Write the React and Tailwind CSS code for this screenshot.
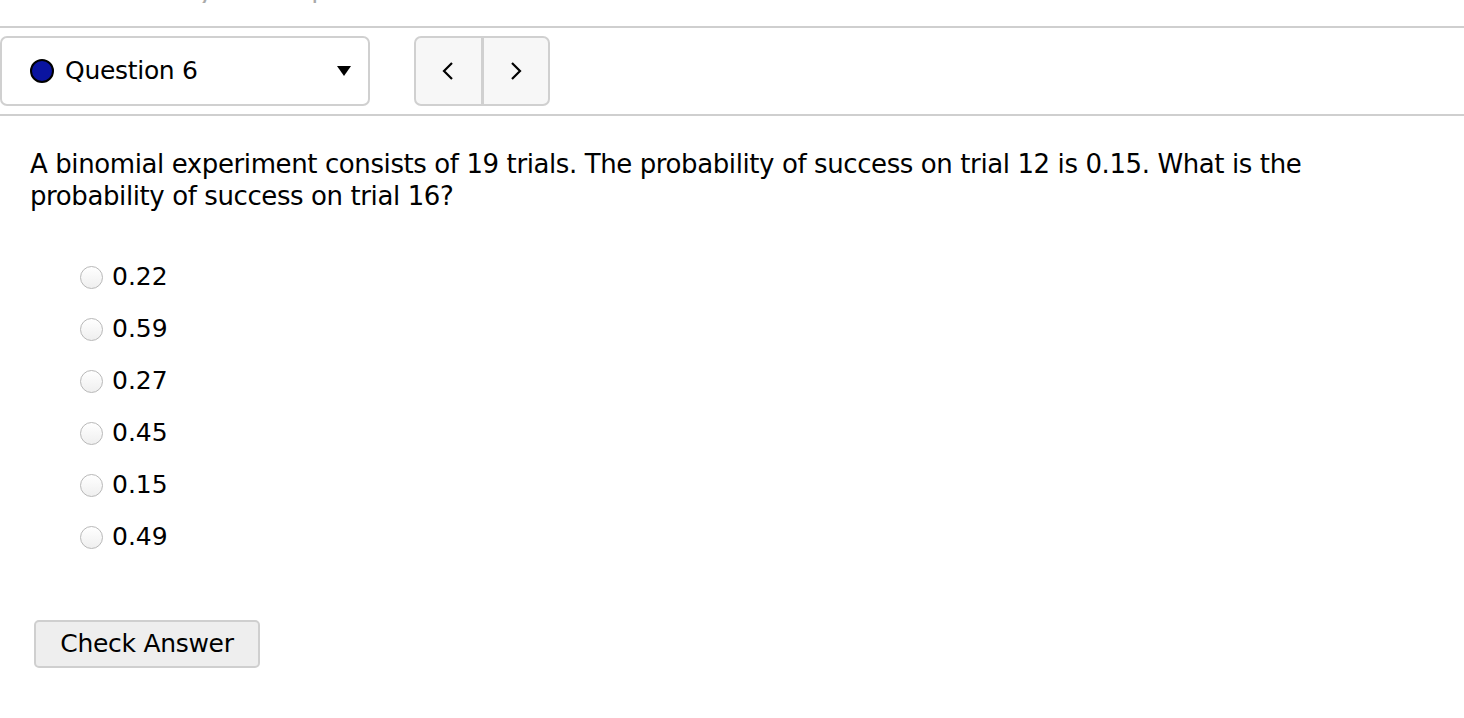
import { useState } from 'react'

const options = ['0.22', '0.59', '0.27', '0.45', '0.15', '0.49']

export default function App() {
  const [picked, setPicked] = useState(null)

  return (
    <div className="min-h-screen bg-white text-black font-['DejaVu_Sans',Verdana,sans-serif]">

      {/* 切れた前の行 */}
      <div className="h-[3px] overflow-hidden flex items-end">
        <p className="text-[26px] leading-none text-[#aaa] whitespace-nowrap">Score on last try: 0 of 1 pts. See Details</p>
      </div>

      <div className="mt-[23px] h-[2px] bg-[#cfcfcf]" />

      {/* 問題セレクタ */}
      <div className="flex gap-[44px] mt-[8px]">
        <button className="w-[370px] h-[70px] flex items-center pl-[28px] pr-[16px] border-2 border-[#d0d0d0] rounded-[7px] bg-white">
          <span className="w-[24px] h-[24px] rounded-full bg-[#0a14a0] border-[2.5px] border-black" />
          <span className="ml-[11px] text-[25px] tracking-[-0.3px]">Question 6</span>
          <svg className="ml-auto" width="16" height="12" viewBox="0 0 16 12">
            <path d="M1 1 H15 L8 11 Z" fill="#000" />
          </svg>
        </button>
        <div className="flex w-[136px] h-[70px] border-2 border-[#d0d0d0] rounded-[7px] bg-[#f7f7f7] overflow-hidden">
          <button className="flex-1 flex items-center justify-center border-r-[3px] border-[#d0d0d0]">
            <svg width="12" height="20" viewBox="0 0 12 20">
              <path d="M10 2 L2 10 L10 18" fill="none" stroke="#000" strokeWidth="2.2" />
            </svg>
          </button>
          <button className="flex-1 flex items-center justify-center">
            <svg width="12" height="20" viewBox="0 0 12 20">
              <path d="M2 2 L10 10 L2 18" fill="none" stroke="#000" strokeWidth="2.2" />
            </svg>
          </button>
        </div>
      </div>

      <div className="mt-[8px] h-[2px] bg-[#cfcfcf]" />

      {/* 問題文 */}
      <p className="mt-[32px] ml-[30px] w-[1330px] text-[26px] leading-[32px] tracking-[-0.4px]">
        A binomial experiment consists of 19 trials. The probability of success on trial 12 is 0.15. What is the probability of success on trial 16?
      </p>

      {/* 選択肢 */}
      <div className="mt-[50px] ml-[80px] flex flex-col gap-[22px]">
        {options.map((o) => (
          <label key={o} className="flex items-center h-[30px] cursor-pointer" onClick={() => setPicked(o)}>
            <span className="w-[23px] h-[23px] rounded-full border border-[#b8b8b8] bg-gradient-to-b from-white to-[#efefef] flex items-center justify-center">
              {picked === o && <span className="w-[9px] h-[9px] rounded-full bg-[#333]" />}
            </span>
            <span className="ml-[9px] text-[25px]">{o}</span>
          </label>
        ))}
      </div>

      <button className="mt-[68px] ml-[34px] w-[226px] h-[48px] border-2 border-[#cfcfcf] rounded-[5px] bg-[#eeeeee] text-[25px] tracking-[-0.3px]">
        Check Answer
      </button>
    </div>
  )
}
